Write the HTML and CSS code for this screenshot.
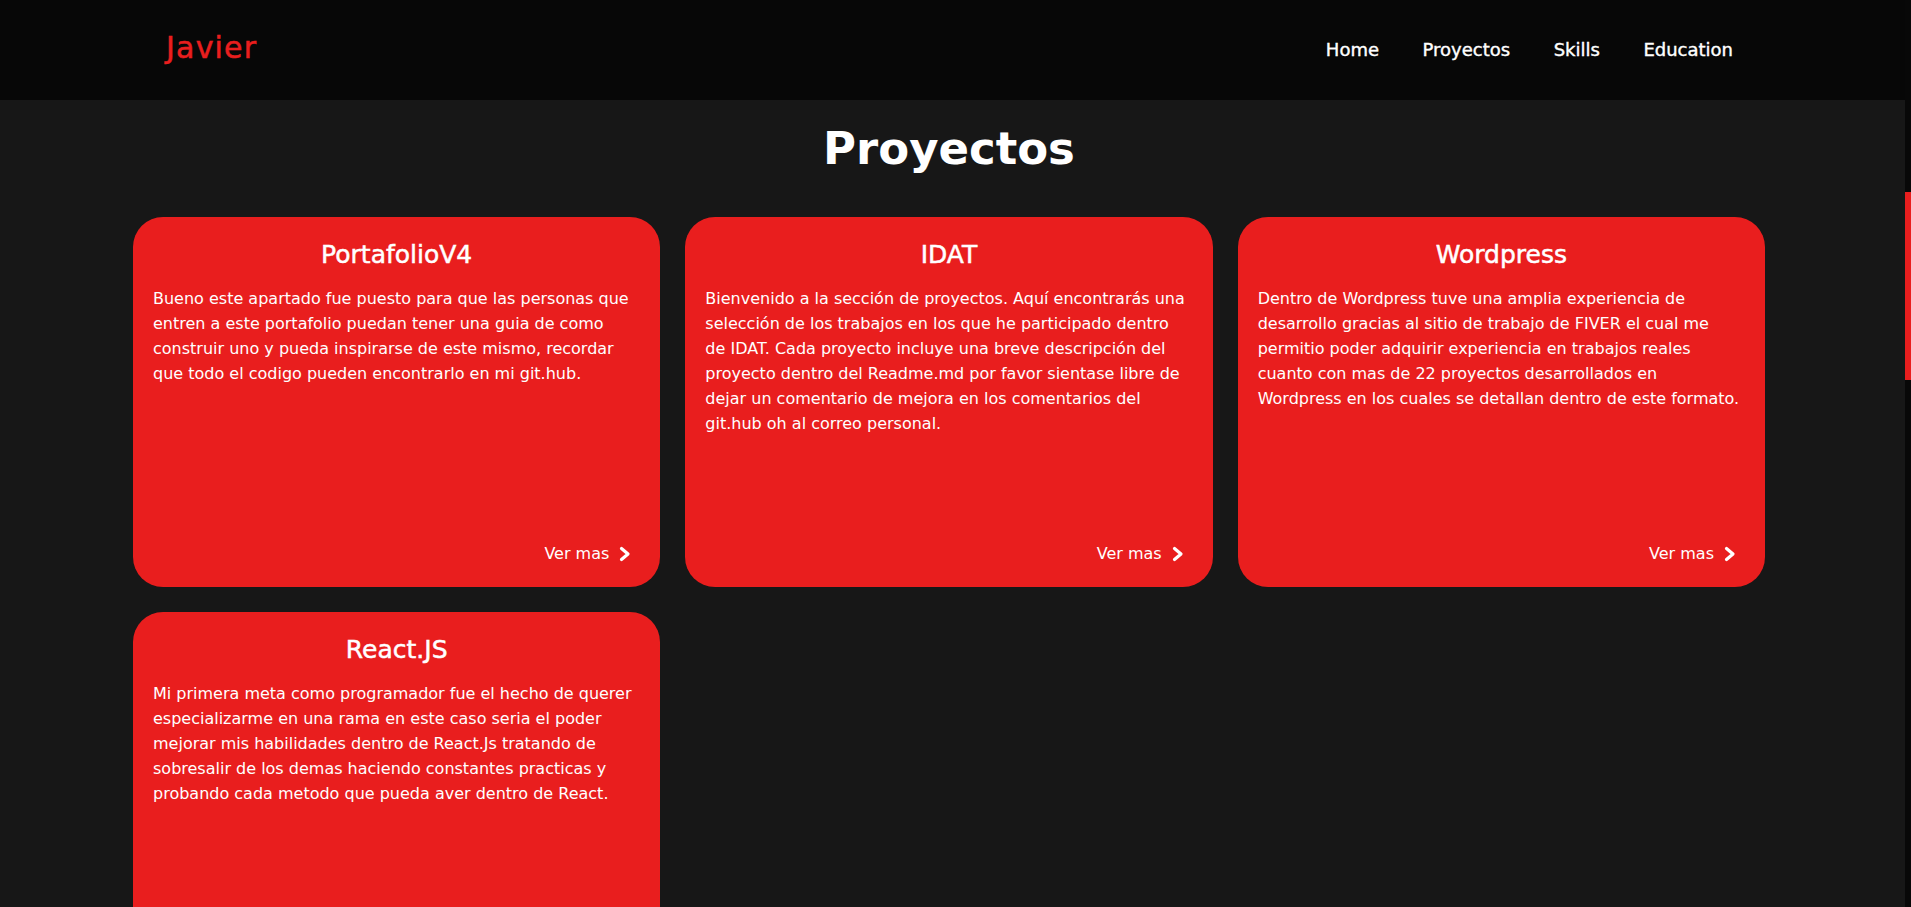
FILE: index.html
```html
<!DOCTYPE html>
<html lang="es">
<head>
<meta charset="utf-8">
<title>Javier - Proyectos</title>
<link rel="stylesheet" href="styles.css">
</head>
<body>
<header class="topbar">
  <a class="brand" href="#">Javier</a>
  <nav class="nav">
    <a href="#">Home</a>
    <a href="#">Proyectos</a>
    <a href="#">Skills</a>
    <a href="#">Education</a>
  </nav>
</header>

<main class="projects">
  <h1 class="projects-title">Proyectos</h1>
  <div class="grid">
    <article class="card">
      <h3 class="card-title">PortafolioV4</h3>
      <p class="card-text">Bueno este apartado fue puesto para que las personas que entren a este portafolio puedan tener una guia de como construir uno y pueda inspirarse de este mismo, recordar que todo el codigo pueden encontrarlo en mi git.hub.</p>
      <a class="card-link" href="#">Ver mas <svg class="chev" viewBox="0 0 13 16" width="13" height="16"><polyline points="3.5,2.5 10,8 3.5,13.5"/></svg></a>
    </article>
    <article class="card">
      <h3 class="card-title">IDAT</h3>
      <p class="card-text">Bienvenido a la sección de proyectos. Aquí encontrarás una selección de los trabajos en los que he participado dentro de IDAT. Cada proyecto incluye una breve descripción del proyecto dentro del Readme.md por favor sientase libre de dejar un comentario de mejora en los comentarios del git.hub oh al correo personal.</p>
      <a class="card-link" href="#">Ver mas <svg class="chev" viewBox="0 0 13 16" width="13" height="16"><polyline points="3.5,2.5 10,8 3.5,13.5"/></svg></a>
    </article>
    <article class="card">
      <h3 class="card-title">Wordpress</h3>
      <p class="card-text">Dentro de Wordpress tuve una amplia experiencia de desarrollo gracias al sitio de trabajo de FIVER el cual me permitio poder adquirir experiencia en trabajos reales cuanto con mas de 22 proyectos desarrollados en Wordpress en los cuales se detallan dentro de este formato.</p>
      <a class="card-link" href="#">Ver mas <svg class="chev" viewBox="0 0 13 16" width="13" height="16"><polyline points="3.5,2.5 10,8 3.5,13.5"/></svg></a>
    </article>
    <article class="card">
      <h3 class="card-title">React.JS</h3>
      <p class="card-text">Mi primera meta como programador fue el hecho de querer especializarme en una rama en este caso seria el poder mejorar mis habilidades dentro de React.Js tratando de sobresalir de los demas haciendo constantes practicas y probando cada metodo que pueda aver dentro de React.</p>
    </article>
  </div>
</main>

<div class="scrollbar"><div class="scrollbar-thumb"></div></div>
</body>
</html>
```

FILE: styles.css
```css
* { box-sizing: border-box; }

html, body {
  height: 100%;
}

body {
  margin: 0 6px 0 0;
  background: #171717;
  color: #ffffff;
  font-family: "DejaVu Sans", "Noto Sans", sans-serif;
  overflow: hidden;
}

a { color: inherit; text-decoration: none; }

.topbar {
  height: 100px;
  background: #070707;
  display: flex;
  align-items: center;
  justify-content: space-between;
  padding: 0 172px 0 166px;
}

.brand {
  color: #e91e1e;
  font-size: 30px;
  letter-spacing: 1.2px;
  line-height: 36px;
  padding-bottom: 5px;
  -webkit-text-stroke: 0.5px #e91e1e;
}

.nav {
  display: flex;
  gap: 43.5px;
  font-size: 18px;
  line-height: 24px;
  -webkit-text-stroke: 0.4px #ffffff;
}

.projects {
  padding: 22px 140px 0 133px;
}

.projects-title {
  margin: 0 0 41px;
  text-align: center;
  font-size: 45px;
  line-height: 54px;
  font-weight: bold;
}

.grid {
  display: grid;
  grid-template-columns: repeat(3, 1fr);
  gap: 25px;
}

.card {
  background: #e91e1e;
  border-radius: 30px;
  height: 370px;
  padding: 20px 20px 21px;
  display: flex;
  flex-direction: column;
}

.card-title {
  margin: 0 0 13px;
  text-align: center;
  font-size: 25px;
  line-height: 36px;
  font-weight: normal;
  -webkit-text-stroke: 0.5px #ffffff;
}

.card-text {
  margin: 0;
  flex: 1;
  font-size: 16px;
  line-height: 25px;
}

.card-link {
  align-self: flex-end;
  display: flex;
  align-items: center;
  gap: 9px;
  margin-right: 9px;
  font-size: 16px;
  line-height: 25px;
}

.chev polyline {
  fill: none;
  stroke: #ffffff;
  stroke-width: 3.2;
  stroke-linecap: round;
  stroke-linejoin: round;
}

.scrollbar {
  position: fixed;
  top: 0;
  right: 0;
  width: 6px;
  height: 100%;
  background: #080808;
  padding-top: 192px;
}

.scrollbar-thumb {
  height: 188px;
  background: #e91e1e;
}
```
